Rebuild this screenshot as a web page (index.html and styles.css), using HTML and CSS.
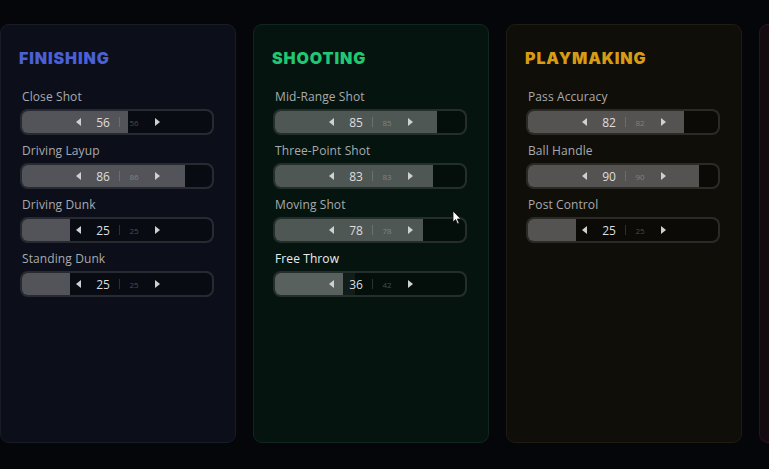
FILE: index.html
```html
<!DOCTYPE html>
<html>
<head>
    <link rel="stylesheet" href="styles.css">
</head>
<body>
    <div class="board">
        <div class="card card-finishing">
            <h2>FINISHING</h2>
            <div class="attr">
                <div class="attr-label">Close Shot</div>
                <div class="slider">
                    <div class="fill" style="width: 56%"></div>
                    <div class="ctrl">
                        <span class="arrow left"></span>
                        <span class="val">56</span>
                        <span class="sep"></span>
                        <span class="base">56</span>
                        <span class="arrow right"></span>
                    </div>
                </div>
            </div>
            <div class="attr">
                <div class="attr-label">Driving Layup</div>
                <div class="slider">
                    <div class="fill" style="width: 86%"></div>
                    <div class="ctrl">
                        <span class="arrow left"></span>
                        <span class="val">86</span>
                        <span class="sep"></span>
                        <span class="base">86</span>
                        <span class="arrow right"></span>
                    </div>
                </div>
            </div>
            <div class="attr">
                <div class="attr-label">Driving Dunk</div>
                <div class="slider">
                    <div class="fill" style="width: 25%"></div>
                    <div class="ctrl">
                        <span class="arrow left"></span>
                        <span class="val">25</span>
                        <span class="sep"></span>
                        <span class="base">25</span>
                        <span class="arrow right"></span>
                    </div>
                </div>
            </div>
            <div class="attr">
                <div class="attr-label">Standing Dunk</div>
                <div class="slider">
                    <div class="fill" style="width: 25%"></div>
                    <div class="ctrl">
                        <span class="arrow left"></span>
                        <span class="val">25</span>
                        <span class="sep"></span>
                        <span class="base">25</span>
                        <span class="arrow right"></span>
                    </div>
                </div>
            </div>
        </div>

        <div class="card card-shooting">
            <h2>SHOOTING</h2>
            <div class="attr">
                <div class="attr-label">Mid-Range Shot</div>
                <div class="slider">
                    <div class="fill" style="width: 85%"></div>
                    <div class="ctrl">
                        <span class="arrow left"></span>
                        <span class="val">85</span>
                        <span class="sep"></span>
                        <span class="base">85</span>
                        <span class="arrow right"></span>
                    </div>
                </div>
            </div>
            <div class="attr">
                <div class="attr-label">Three-Point Shot</div>
                <div class="slider">
                    <div class="fill" style="width: 83%"></div>
                    <div class="ctrl">
                        <span class="arrow left"></span>
                        <span class="val">83</span>
                        <span class="sep"></span>
                        <span class="base">83</span>
                        <span class="arrow right"></span>
                    </div>
                </div>
            </div>
            <div class="attr">
                <div class="attr-label">Moving Shot</div>
                <div class="slider">
                    <div class="fill" style="width: 78%"></div>
                    <div class="ctrl">
                        <span class="arrow left"></span>
                        <span class="val">78</span>
                        <span class="sep"></span>
                        <span class="base">78</span>
                        <span class="arrow right"></span>
                    </div>
                </div>
            </div>
            <div class="attr hover">
                <div class="attr-label">Free Throw</div>
                <div class="slider">
                    <div class="fill-base" style="width: 42%"></div>
                    <div class="fill" style="width: 36%"></div>
                    <div class="ctrl">
                        <span class="arrow left"></span>
                        <span class="val">36</span>
                        <span class="sep"></span>
                        <span class="base">42</span>
                        <span class="arrow right"></span>
                    </div>
                </div>
            </div>
        </div>

        <div class="card card-playmaking">
            <h2>PLAYMAKING</h2>
            <div class="attr">
                <div class="attr-label">Pass Accuracy</div>
                <div class="slider">
                    <div class="fill" style="width: 82%"></div>
                    <div class="ctrl">
                        <span class="arrow left"></span>
                        <span class="val">82</span>
                        <span class="sep"></span>
                        <span class="base">82</span>
                        <span class="arrow right"></span>
                    </div>
                </div>
            </div>
            <div class="attr">
                <div class="attr-label">Ball Handle</div>
                <div class="slider">
                    <div class="fill" style="width: 90%"></div>
                    <div class="ctrl">
                        <span class="arrow left"></span>
                        <span class="val">90</span>
                        <span class="sep"></span>
                        <span class="base">90</span>
                        <span class="arrow right"></span>
                    </div>
                </div>
            </div>
            <div class="attr">
                <div class="attr-label">Post Control</div>
                <div class="slider">
                    <div class="fill" style="width: 25%"></div>
                    <div class="ctrl">
                        <span class="arrow left"></span>
                        <span class="val">25</span>
                        <span class="sep"></span>
                        <span class="base">25</span>
                        <span class="arrow right"></span>
                    </div>
                </div>
            </div>
        </div>

        <div class="card card-defense"></div>
    </div>

    <!-- mouse pointer -->
    <svg class="pointer" width="10" height="15" viewBox="0 0 10 15">
        <path d="M1 1 L1 12 L3.6 9.6 L5.6 14 L7.2 13.3 L5.3 9 L8.8 9 Z" fill="#fff" stroke="#111" stroke-width="0.8" stroke-linejoin="round"/>
    </svg>
</body>
</html>
```

FILE: styles.css
```css
* {
    margin: 0;
    padding: 0;
    box-sizing: border-box;
}

:root {
    --bg: #05060a;
    --text-grey: #a8aaae;
    --text-white: #ececec;
    --fill: rgba(255, 255, 255, 0.3);
}

body {
    background: var(--bg);
    font-family: 'Open Sans', 'Noto Sans', sans-serif;
    color: var(--text-white);
    width: 769px;
    height: 469px;
    overflow: hidden;
    position: relative;
}

.board {
    display: flex;
    gap: 17px;
    padding: 24px 0 0 0;
    width: 769px;
    overflow: hidden;
}

.card {
    flex: 0 0 236px;
    height: 419px;
    border-radius: 9px;
    border: 1px solid;
    padding: 25px 20px 0 18px;
}

.card-finishing {
    background: #0c0f19;
    border-color: #181c27;
}

.card-shooting {
    background: #06140f;
    border-color: #10261e;
}

.card-playmaking {
    background: #100e09;
    border-color: #1f1c13;
}

.card-defense {
    background: #140a10;
    border-color: #2a1420;
}

h2 {
    font-family: Inter, sans-serif;
    font-weight: 900;
    font-size: 16px;
    letter-spacing: 0.9px;
    line-height: 16px;
    margin-bottom: 23px;
}

.card-finishing h2 {
    color: #4a60d4;
}

.card-shooting h2 {
    color: #1fc872;
}

.card-playmaking h2 {
    color: #d59c14;
}

.attr {
    margin-bottom: 8px;
    padding-left: 1px;
}

.attr-label {
    font-size: 12px;
    line-height: 15px;
    color: var(--text-grey);
    padding-left: 2px;
    margin-bottom: 5px;
    letter-spacing: 0.1px;
}

.attr.hover .attr-label {
    color: var(--text-white);
}

.slider {
    position: relative;
    height: 26px;
    width: 194px;
    border: 2px solid rgba(255, 255, 255, 0.13);
    border-radius: 8px;
    background: rgba(0, 0, 0, 0.25);
    overflow: hidden;
    display: flex;
    align-items: center;
    justify-content: center;
}

.fill,
.fill-base {
    position: absolute;
    left: 0;
    top: 0;
    bottom: 0;
    background: var(--fill);
}

.fill-base {
    background: rgba(255, 255, 255, 0.06);
}

.ctrl {
    position: relative;
    display: flex;
    align-items: center;
    gap: 5px;
    margin-left: 2px;
}

.val {
    width: 22px;
    text-align: center;
    font-size: 12px;
    font-weight: 500;
    color: #dedede;
}

.base {
    width: 18px;
    text-align: center;
    font-size: 8px;
    color: rgba(255, 255, 255, 0.27);
}

.sep {
    width: 1px;
    height: 10px;
    background: rgba(255, 255, 255, 0.15);
}

.arrow {
    width: 0;
    height: 0;
    border-top: 4px solid transparent;
    border-bottom: 4px solid transparent;
}

.arrow.left {
    border-right: 5px solid #d0d0d0;
    margin-right: 6px;
}

.arrow.right {
    border-left: 5px solid #d0d0d0;
    margin-left: 7px;
}

.pointer {
    position: absolute;
    left: 452px;
    top: 210px;
}
```
